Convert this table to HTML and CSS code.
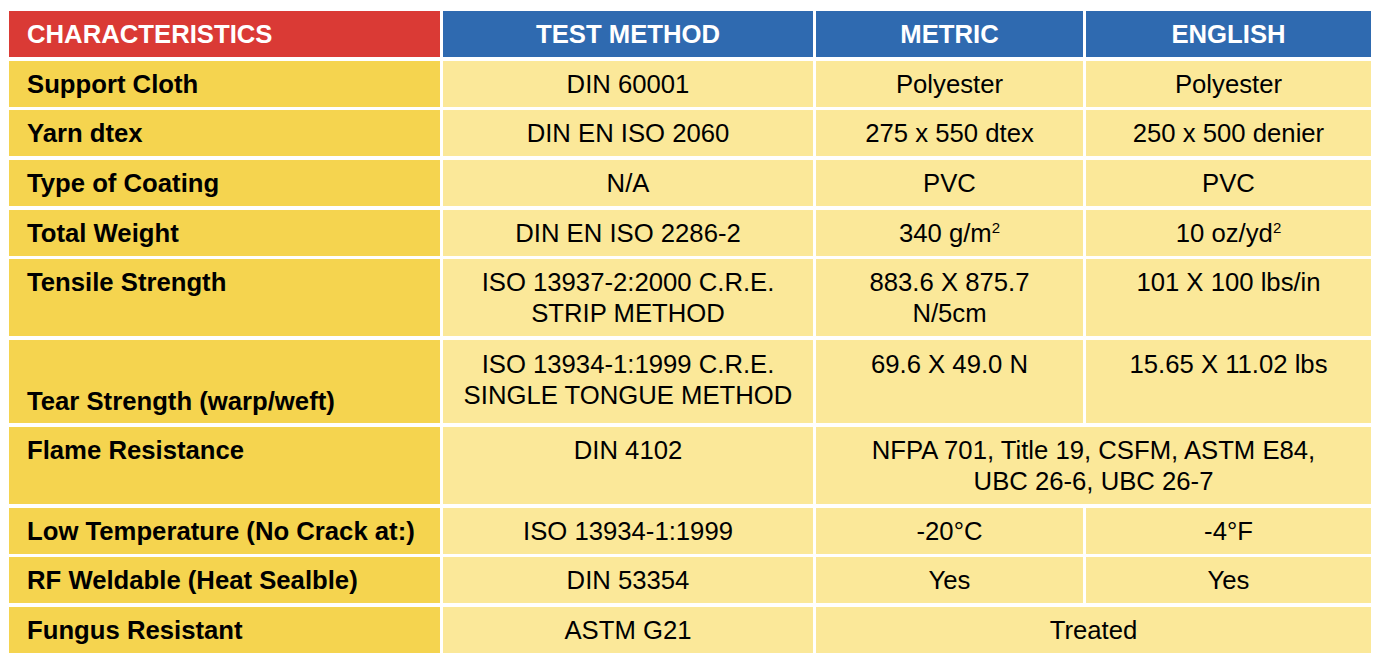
FILE: index.html
```html
<!DOCTYPE html>
<html lang="en">
<head>
<meta charset="utf-8">
<title>Characteristics</title>
<link rel="stylesheet" href="styles.css">
</head>
<body>
<div class="spec">
  <div class="cell hd hd-red">CHARACTERISTICS</div>
  <div class="cell hd hd-blue">TEST METHOD</div>
  <div class="cell hd hd-blue">METRIC</div>
  <div class="cell hd hd-blue">ENGLISH</div>

  <div class="cell key">Support Cloth</div>
  <div class="cell val">DIN 60001</div>
  <div class="cell val">Polyester</div>
  <div class="cell val">Polyester</div>

  <div class="cell key">Yarn dtex</div>
  <div class="cell val">DIN EN ISO 2060</div>
  <div class="cell val">275 x 550 dtex</div>
  <div class="cell val">250 x 500 denier</div>

  <div class="cell key">Type of Coating</div>
  <div class="cell val">N/A</div>
  <div class="cell val">PVC</div>
  <div class="cell val">PVC</div>

  <div class="cell key">Total Weight</div>
  <div class="cell val">DIN EN ISO 2286-2</div>
  <div class="cell val">340 g/m<sup>2</sup></div>
  <div class="cell val">10 oz/yd<sup>2</sup></div>

  <div class="cell key">Tensile Strength</div>
  <div class="cell val">ISO 13937-2:2000 C.R.E.<br>STRIP METHOD</div>
  <div class="cell val">883.6 X 875.7<br>N/5cm</div>
  <div class="cell val">101 X 100 lbs/in</div>

  <div class="cell key key-bottom">Tear Strength (warp/weft)</div>
  <div class="cell val val-tear">ISO 13934-1:1999 C.R.E.<br>SINGLE TONGUE METHOD</div>
  <div class="cell val val-tear">69.6 X 49.0 N</div>
  <div class="cell val val-tear">15.65 X 11.02 lbs</div>

  <div class="cell key">Flame Resistance</div>
  <div class="cell val">DIN 4102</div>
  <div class="cell val span2">NFPA 701, Title 19, CSFM, ASTM E84,<br>UBC 26-6, UBC 26-7</div>

  <div class="cell key">Low Temperature (No Crack at:)</div>
  <div class="cell val">ISO 13934-1:1999</div>
  <div class="cell val">-20°C</div>
  <div class="cell val">-4°F</div>

  <div class="cell key">RF Weldable (Heat Sealble)</div>
  <div class="cell val">DIN 53354</div>
  <div class="cell val">Yes</div>
  <div class="cell val">Yes</div>

  <div class="cell key">Fungus Resistant</div>
  <div class="cell val">ASTM G21</div>
  <div class="cell val span2">Treated</div>
</div>
</body>
</html>
```

FILE: styles.css
```css
html, body {
  margin: 0;
  padding: 0;
  background: #ffffff;
}

body {
  padding: 11px 9px;
  font-family: "Liberation Sans", Arial, sans-serif;
  font-size: 25.7px;
  line-height: 31px;
  color: #000000;
}

.spec {
  display: grid;
  width: 1362px;
  grid-template-columns: 431px 370px 267px 285px;
  grid-template-rows: 46px 46px 46px 46px 46px 77px 83px 77px 46px 46px 46px;
  column-gap: 3px;
  row-gap: 3.7px;
}

.cell {
  box-sizing: border-box;
  padding-top: 8px;
}

.hd {
  color: #ffffff;
  font-weight: bold;
  text-align: center;
}

.hd-red {
  background: #da3a35;
  text-align: left;
  padding-left: 18px;
}

.hd-blue {
  background: #2f6ab0;
}

.key {
  background: #f5d44f;
  font-weight: bold;
  padding-left: 18px;
}

.key-bottom {
  display: flex;
  align-items: flex-end;
  padding-top: 0;
  padding-bottom: 6px;
}

.val {
  background: #fbe899;
  text-align: center;
}

.val-tear {
  padding-top: 8.5px;
}

.span2 {
  grid-column: span 2;
}

sup {
  font-size: 15px;
  line-height: 0;
  vertical-align: 9px;
}
```
